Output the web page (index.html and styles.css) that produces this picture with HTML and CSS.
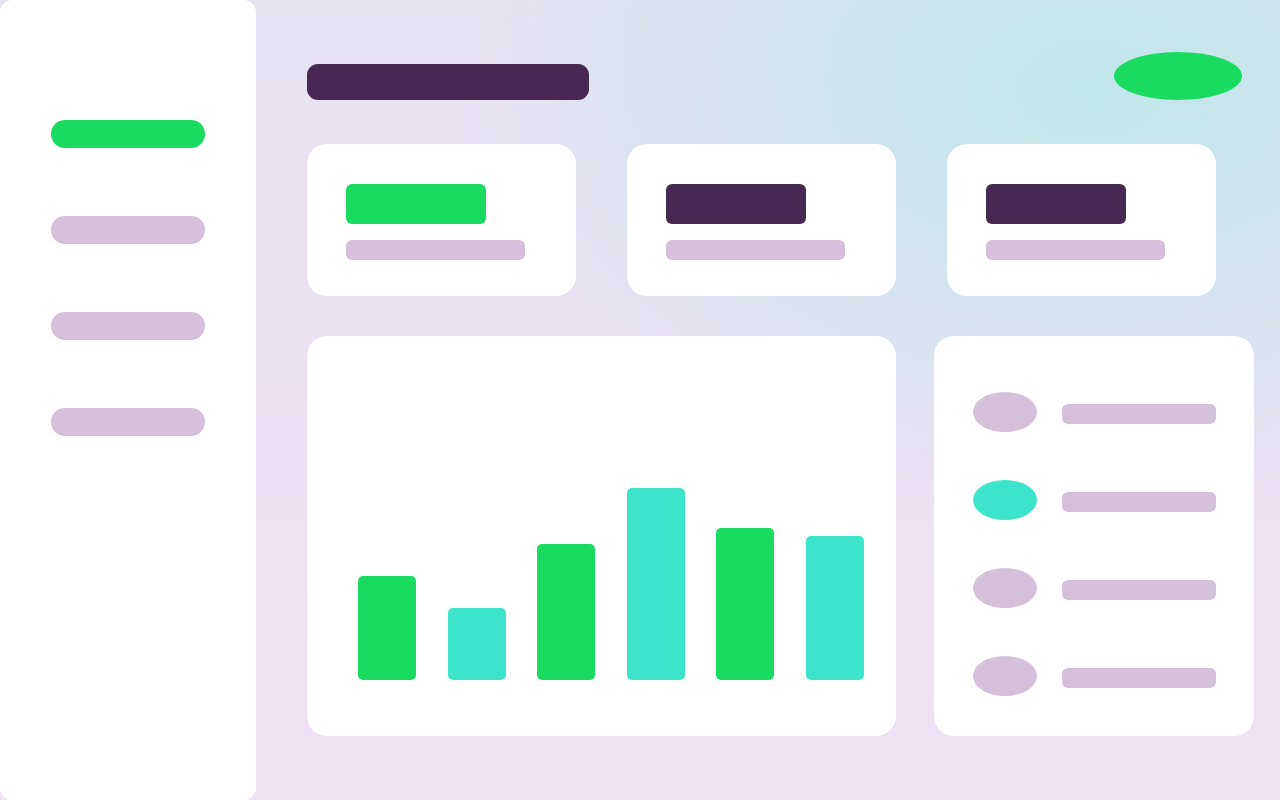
FILE: index.html
```html
<!DOCTYPE html>
<html lang="en">
<head>
<meta charset="utf-8">
<title>Dashboard</title>
<link rel="stylesheet" href="styles.css">
</head>
<body>
<div class="app">
  <aside class="sidebar">
    <div class="nav-item active"></div>
    <div class="nav-item"></div>
    <div class="nav-item"></div>
    <div class="nav-item"></div>
  </aside>
  <main class="main">
    <header class="header">
      <div class="title"></div>
      <div class="avatar"></div>
    </header>
    <section class="stats">
      <div class="stat-card"><div class="stat-value green"></div><div class="stat-label"></div></div>
      <div class="stat-card"><div class="stat-value dark"></div><div class="stat-label"></div></div>
      <div class="stat-card"><div class="stat-value dark"></div><div class="stat-label"></div></div>
    </section>
    <section class="bottom">
      <div class="chart-card">
        <div class="bar green" style="height:104px"></div>
        <div class="bar teal" style="height:72px"></div>
        <div class="bar green" style="height:136px"></div>
        <div class="bar teal" style="height:192px"></div>
        <div class="bar green" style="height:152px"></div>
        <div class="bar teal" style="height:144px"></div>
      </div>
      <div class="list-card">
        <div class="list-row"><div class="dot"></div><div class="line"></div></div>
        <div class="list-row"><div class="dot teal"></div><div class="line"></div></div>
        <div class="list-row"><div class="dot"></div><div class="line"></div></div>
        <div class="list-row"><div class="dot"></div><div class="line"></div></div>
      </div>
    </section>
  </main>
</div>
</body>
</html>
```
FILE: styles.css
```css
* { box-sizing: border-box; }
html, body { margin: 0; padding: 0; }
body {
  width: 1280px;
  height: 800px;
  overflow: hidden;
  font-family: "Liberation Sans", Arial, sans-serif;
  background:
    radial-gradient(ellipse 620px 420px at 1090px 90px, #c0e6ea 0%, rgba(192,230,234,0.6) 45%, rgba(192,230,234,0) 100%),
    linear-gradient(180deg, #e6e2f2 0%, #ebe1f3 50%, #efe0f3 100%);
}
.app { display: flex; height: 800px; }
.sidebar {
  flex: 0 0 256px;
  width: 256px;
  height: 800px;
  background: #ffffff;
  border-radius: 12px;
  padding: 120px 0 0 51px;
  display: flex;
  flex-direction: column;
  gap: 68px;
}
.nav-item {
  width: 154px;
  height: 28px;
  border-radius: 14px;
  background: #d4c0da;
}
.nav-item.active { background: #19db60; }
.main {
  flex: 0 0 1024px;
  width: 1024px;
  padding: 52px 38px 0 51px;
}
.header {
  display: flex;
  justify-content: space-between;
  align-items: flex-end;
  width: 935px;
  height: 48px;
}
.title {
  width: 282px;
  height: 36px;
  border-radius: 11px;
  background: #482852;
}
.avatar {
  width: 128px;
  height: 48px;
  border-radius: 50%;
  background: #19db60;
}
.stats {
  display: flex;
  gap: 51px;
  margin-top: 44px;
}
.stat-card {
  flex: 0 0 269px;
  height: 152px;
  background: #ffffff;
  border-radius: 20px;
  padding: 40px 0 0 39px;
  display: flex;
  flex-direction: column;
  gap: 16px;
}
.stat-value {
  width: 140px;
  height: 40px;
  border-radius: 6px;
}
.stat-value.green { background: #19db60; }
.stat-value.dark { background: #482852; }
.stat-label {
  width: 179px;
  height: 20px;
  border-radius: 6px;
  background: #d4c0da;
}
.bottom {
  display: flex;
  gap: 38px;
  margin-top: 40px;
}
.chart-card {
  flex: 0 0 589px;
  height: 400px;
  background: #ffffff;
  border-radius: 20px;
  padding: 0 32px 56px 51px;
  display: flex;
  align-items: flex-end;
  justify-content: space-between;
}
.bar {
  width: 58px;
  border-radius: 5px;
}
.bar.green { background: #19db60; }
.bar.teal { background: #3de4cc; }
.list-card {
  flex: 0 0 320px;
  height: 400px;
  background: #ffffff;
  border-radius: 20px;
  padding: 56px 0 0 39px;
  display: flex;
  flex-direction: column;
  gap: 48px;
}
.list-row {
  display: flex;
  align-items: flex-start;
  gap: 25px;
  height: 40px;
}
.dot {
  width: 64px;
  height: 40px;
  border-radius: 50%;
  background: #d4c0da;
}
.dot.teal { background: #3de4cc; }
.line {
  width: 154px;
  height: 20px;
  margin-top: 12px;
  border-radius: 6px;
  background: #d4c0da;
}
```
